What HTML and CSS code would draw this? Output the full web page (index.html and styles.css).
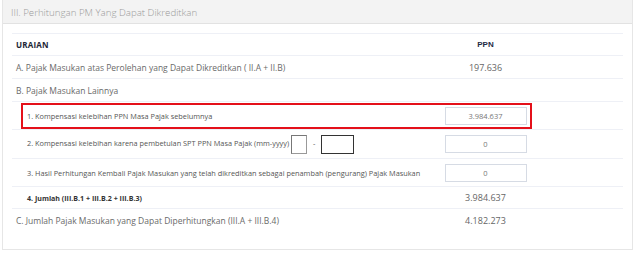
FILE: index.html
```html
<!DOCTYPE html>
<html lang="id">
<head>
  <meta charset="UTF-8">
  <title>Perhitungan PM</title>
  <link rel="stylesheet" href="styles.css">
</head>
<body>
  <div class="panel">
    <div class="panel-heading">III. Perhitungan PM Yang Dapat Dikreditkan</div>
    <div class="panel-body">
      <div class="tabel">
        <!-- Kepala tabel -->
        <div class="baris kepala">
          <div class="uraian">URAIAN</div>
          <div class="nilai ppn">PPN</div>
        </div>

        <div class="baris utama">
          <div class="uraian">A. Pajak Masukan atas Perolehan yang Dapat Dikreditkan ( II.A + II.B)</div>
          <div class="nilai">197.636</div>
        </div>

        <div class="baris utama">
          <div class="uraian">B. Pajak Masukan Lainnya</div>
          <div class="nilai"></div>
        </div>

        <!-- Baris yang ditandai kotak merah -->
        <div class="baris sub tinggi sorot">
          <div class="uraian">1. Kompensasi kelebihan PPN Masa Pajak sebelumnya</div>
          <div class="nilai"><input class="isian" type="text" value="3.984.637"></div>
          <div class="kotak-merah"></div>
        </div>

        <div class="baris sub tinggi">
          <div class="uraian">2. Kompensasi kelebihan karena pembetulan SPT PPN Masa Pajak (mm-yyyy)
            <input class="kecil bulan" type="text"> <span class="strip">-</span> <input class="kecil tahun" type="text">
          </div>
          <div class="nilai"><input class="isian" type="text" value="0"></div>
        </div>

        <div class="baris sub tinggi">
          <div class="uraian">3. Hasil Perhitungan Kembali Pajak Masukan yang telah dikreditkan sebagai penambah (pengurang) Pajak Masukan</div>
          <div class="nilai"><input class="isian" type="text" value="0"></div>
        </div>

        <div class="baris sub jumlah">
          <div class="uraian">4. Jumlah (III.B.1 + III.B.2 + III.B.3)</div>
          <div class="nilai">3.984.637</div>
        </div>

        <div class="baris utama akhir">
          <div class="uraian">C. Jumlah Pajak Masukan yang Dapat Diperhitungkan (III.A + III.B.4)</div>
          <div class="nilai">4.182.273</div>
        </div>
      </div>
    </div>
  </div>
</body>
</html>
```

FILE: styles.css
```css
* { box-sizing: border-box; margin: 0; padding: 0; }

body {
  font-family: 'Open Sans', sans-serif;
  background: #fff;
  color: #666;
  width: 638px;
  height: 258px;
  overflow: hidden;
}

/* Panel */
.panel {
  margin-left: 2px;
  width: 631px;
  height: 250px;
  border: 1px solid #e6e6e6;
  border-top: none;
}

.panel-heading {
  height: 24px;
  background: #f3f3f3;
  border-bottom: 1px solid #e2e2e2;
  padding: 6px 0 0 8px;
  font-size: 9.7px;
  font-weight: 300;
  color: #9a9a9a;
}

.panel-body {
  padding: 9px 8px 0 9px;
}

/* Tabel */
.tabel {
  width: 611px;
  border-top: 1px solid #eef0f6;
}

.baris {
  position: relative;
  display: grid;
  grid-template-columns: 336px 275px;
  align-items: center;
  border-bottom: 1px solid #eef0f6;
  height: 22px;
}

.uraian {
  padding-left: 4px;
  white-space: nowrap;
}

.nilai {
  text-align: center;
  font-size: 9px;
  color: #666;
}

.kepala .uraian {
  font-size: 8px;
  font-weight: 700;
  color: #1e2636;
  letter-spacing: 0.2px;
}

.kepala .ppn {
  font-family: 'Liberation Sans', Arial, sans-serif;
  font-weight: 700;
  font-size: 8px;
  color: #1e2a44;
}

.utama { height: 23px; }
.utama .uraian { font-size: 8.5px; color: #6a6a6a; }

.sub .uraian {
  padding-left: 15px;
  font-size: 7.35px;
  color: #555;
}

.tinggi { height: 28px; }
.sub.tinggi:nth-child(5) { height: 29px; }

.jumlah { height: 22px; }
.jumlah .uraian { font-size: 7.1px; font-weight: 700; color: #333; }
.jumlah .nilai { font-size: 9px; }

.akhir { border-bottom: none; }

/* Isian */
.isian {
  width: 82px;
  height: 18px;
  border: 1px solid #d6dbe4;
  text-align: center;
  font-family: 'Open Sans', sans-serif;
  font-size: 7.5px;
  color: #777;
  background: #fff;
}

.kecil {
  height: 19px;
  vertical-align: middle;
  background: #fff;
}

.bulan {
  width: 16px;
  border: 1px solid #999;
  border-top-color: #777;
  border-left-color: #777;
}

.tahun {
  width: 33px;
  border: 1px solid #333;
}

.strip { margin: 0 4px; }

/* Kotak merah penanda */
.kotak-merah {
  position: absolute;
  left: 9px;
  top: 1px;
  width: 511px;
  height: 26px;
  border: 2px solid #e4101a;
  pointer-events: none;
}
```
